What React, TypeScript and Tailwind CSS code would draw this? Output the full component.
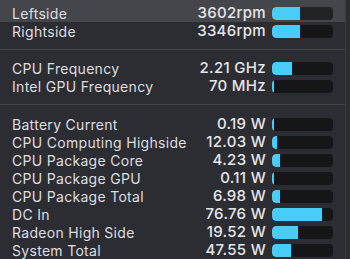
import React from 'react';

interface Reading {
  label: string;
  value: string;
  fill: number; // px of 61
}

const fans: Reading[] = [
  { label: 'Leftside', value: '3602rpm', fill: 28 },
  { label: 'Rightside', value: '3346rpm', fill: 28 },
];

const freqs: Reading[] = [
  { label: 'CPU Frequency', value: '2.21 GHz', fill: 20 },
  { label: 'Intel GPU Frequency', value: '70 MHz', fill: 2 },
];

const power: Reading[] = [
  { label: 'Battery Current', value: '0.19 W', fill: 2 },
  { label: 'CPU Computing Highside', value: '12.03 W', fill: 5 },
  { label: 'CPU Package Core', value: '4.23 W', fill: 8 },
  { label: 'CPU Package GPU', value: '0.11 W', fill: 2 },
  { label: 'CPU Package Total', value: '6.98 W', fill: 8 },
  { label: 'DC In', value: '76.76 W', fill: 50 },
  { label: 'Radeon High Side', value: '19.52 W', fill: 26 },
  { label: 'System Total', value: '47.55 W', fill: 19 },
];

function Row({ r, highlight, tall }: { r: Reading; highlight?: boolean; tall?: boolean }) {
  return (
    <div
      className={`flex items-center pl-[12px] pr-[12px] ${tall ? 'h-[22px] pt-[4px]' : 'h-[18px]'} ${
        highlight ? 'bg-[#45464b]' : ''
      }`}
    >
      <span className="flex-1 truncate text-[14px] tracking-[0.3px] text-[#dedee0]">{r.label}</span>
      <span className="text-right text-[15px] font-medium tracking-[0.3px] text-[#e6e6e8]">{r.value}</span>
      <div className="ml-[6px] flex h-[13px] w-[61px] shrink-0 overflow-hidden rounded-[4px] bg-black/50">
        <div className="h-full rounded-l-[4px] bg-[#47cdf8]" style={{ width: r.fill }} />
      </div>
    </div>
  );
}

function Divider() {
  return <div className="my-[9px] h-px bg-[#434449]" />;
}

export default function App() {
  return (
    <div
      className="h-[259px] w-[350px] overflow-hidden bg-[#2c2d33]"
      style={{ fontFamily: 'Inter, "Noto Sans", sans-serif' }}
    >
      <div className="h-full w-[346px] border-r border-[#3b3c41]">
        <Row r={fans[0]} highlight tall />
        <Row r={fans[1]} />
        <Divider />
        {freqs.map((r) => (
          <Row key={r.label} r={r} />
        ))}
        <Divider />
        <div className="h-[1px]" />
        {power.map((r) => (
          <Row key={r.label} r={r} />
        ))}
      </div>
    </div>
  );
}
